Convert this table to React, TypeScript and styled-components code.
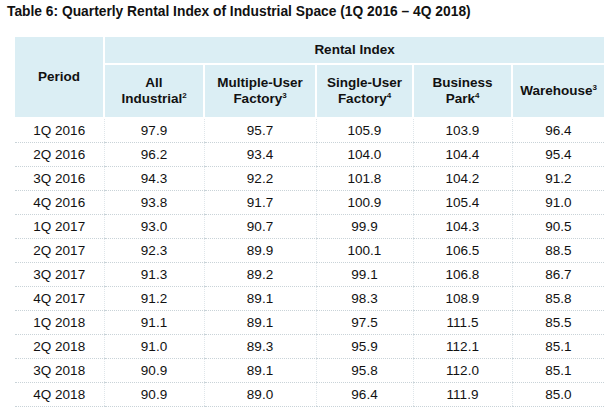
import React from "react";
import styled, { createGlobalStyle } from "styled-components";

const Global = createGlobalStyle`
  html, body { margin: 0; padding: 0; background: #fff; }
  body { font-family: "Liberation Sans", Arial, sans-serif; color: #111; }
`;

const Page = styled.div`
  padding: 4px 0 0 7px;
  width: 614px;
  box-sizing: border-box;
`;

const Title = styled.h1`
  margin: 0;
  font-size: 13.8px;
  line-height: 16px;
  font-weight: bold;
  color: #111;
`;

const Table = styled.table`
  margin: 17px 0 0 8px;
  border-collapse: collapse;
  table-layout: fixed;
  width: 589px;
`;

const Th = styled.th<{ $tall?: boolean }>`
  background: #dbeef4;
  border: 2px solid #fff;
  font-size: 13.5px;
  font-weight: bold;
  line-height: 16px;
  text-align: center;
  vertical-align: middle;
  padding: 0;
  height: ${(p) => (p.$tall ? "52px" : "26px")};
  &:first-child { border-left: none; }
  &:last-child { border-right: none; }
`;

const TopTh = styled(Th)`
  border-top: none;
`;

const Sup = styled.sup`
  font-size: 8px;
  line-height: 0;
  vertical-align: 5px;
`;

const Td = styled.td`
  font-size: 13.5px;
  line-height: 16px;
  text-align: center;
  height: 23px;
  padding: 0;
  border-bottom: 1px dotted #c9d3d8;
  border-left: 1px dotted #dfe6ea;
  &:first-child { border-left: none; }
`;

const cols = [89, 100, 112, 97, 99, 92];

const rows: [string, string, string, string, string, string][] = [
  ["1Q 2016", "97.9", "95.7", "105.9", "103.9", "96.4"],
  ["2Q 2016", "96.2", "93.4", "104.0", "104.4", "95.4"],
  ["3Q 2016", "94.3", "92.2", "101.8", "104.2", "91.2"],
  ["4Q 2016", "93.8", "91.7", "100.9", "105.4", "91.0"],
  ["1Q 2017", "93.0", "90.7", "99.9", "104.3", "90.5"],
  ["2Q 2017", "92.3", "89.9", "100.1", "106.5", "88.5"],
  ["3Q 2017", "91.3", "89.2", "99.1", "106.8", "86.7"],
  ["4Q 2017", "91.2", "89.1", "98.3", "108.9", "85.8"],
  ["1Q 2018", "91.1", "89.1", "97.5", "111.5", "85.5"],
  ["2Q 2018", "91.0", "89.3", "95.9", "112.1", "85.1"],
  ["3Q 2018", "90.9", "89.1", "95.8", "112.0", "85.1"],
  ["4Q 2018", "90.9", "89.0", "96.4", "111.9", "85.0"],
];

export default function App() {
  return (
    <Page>
      <Global />
      <Title>Table 6: Quarterly Rental Index of Industrial Space (1Q 2016 – 4Q 2018)</Title>
      <Table>
        <colgroup>
          {cols.map((w, i) => (
            <col key={i} style={{ width: w }} />
          ))}
        </colgroup>
        <thead>
          <tr>
            <TopTh rowSpan={2}>Period</TopTh>
            <TopTh colSpan={5}>Rental Index</TopTh>
          </tr>
          <tr>
            <Th $tall>
              All
              <br />
              Industrial<Sup>2</Sup>
            </Th>
            <Th $tall>
              Multiple-User
              <br />
              Factory<Sup>3</Sup>
            </Th>
            <Th $tall>
              Single-User
              <br />
              Factory<Sup>4</Sup>
            </Th>
            <Th $tall>
              Business
              <br />
              Park<Sup>4</Sup>
            </Th>
            <Th $tall>
              Warehouse<Sup>3</Sup>
            </Th>
          </tr>
        </thead>
        <tbody>
          {rows.map((r) => (
            <tr key={r[0]}>
              {r.map((c, i) => (
                <Td key={i}>{c}</Td>
              ))}
            </tr>
          ))}
        </tbody>
      </Table>
    </Page>
  );
}
